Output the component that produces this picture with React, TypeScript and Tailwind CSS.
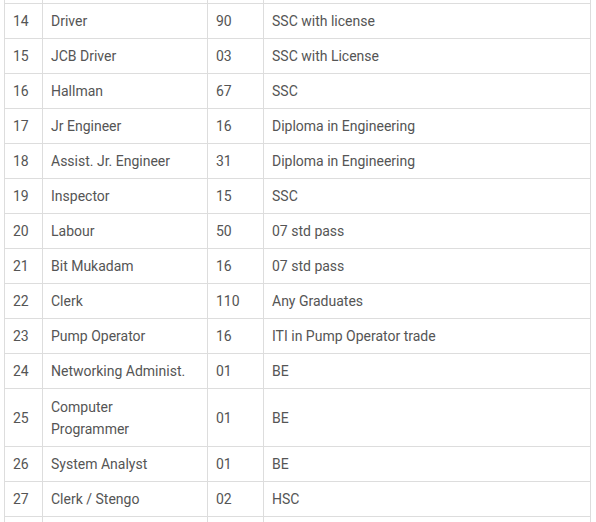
const rows: [string, string, string, string][] = [
  ["14", "Driver", "90", "SSC with license"],
  ["15", "JCB Driver", "03", "SSC with License"],
  ["16", "Hallman", "67", "SSC"],
  ["17", "Jr Engineer", "16", "Diploma in Engineering"],
  ["18", "Assist. Jr. Engineer", "31", "Diploma in Engineering"],
  ["19", "Inspector", "15", "SSC"],
  ["20", "Labour", "50", "07 std pass"],
  ["21", "Bit Mukadam", "16", "07 std pass"],
  ["22", "Clerk", "110", "Any Graduates"],
  ["23", "Pump Operator", "16", "ITI in Pump Operator trade"],
  ["24", "Networking Administ.", "01", "BE"],
  ["25", "Computer\nProgrammer", "01", "BE"],
  ["26", "System Analyst", "01", "BE"],
  ["27", "Clerk / Stengo", "02", "HSC"],
];

const td = "border border-[#dddddd] px-2 py-[6px] align-middle whitespace-pre-line";
const tdTall = "border border-[#dddddd] px-2 pt-[7px] pb-[6px] align-middle whitespace-pre-line";
const edge = "border-x border-[#dddddd] p-0";

export default function App() {
  return (
    <div className="h-[522px] w-[596px] overflow-hidden bg-white font-['Roboto',sans-serif] text-[14px] leading-[22px] text-[#555555]">
      <table className="ml-[4px] w-[587px] table-fixed border-collapse">
        <colgroup>
          <col className="w-[38px]" />
          <col className="w-[165px]" />
          <col className="w-[56px]" />
          <col />
        </colgroup>
        <tbody>
          <tr className="h-[3px]">
            <td className={edge} />
            <td className={edge} />
            <td className={edge} />
            <td className={edge} />
          </tr>
          {rows.map((r) => {
            const cls = r[1].includes("\n") ? tdTall : td;
            return (
              <tr key={r[0]}>
                <td className={cls}>{r[0]}</td>
                <td className={cls}>{r[1]}</td>
                <td className={cls}>{r[2]}</td>
                <td className={cls}>{r[3]}</td>
              </tr>
            );
          })}
          <tr className="h-[20px]">
            <td className={edge} />
            <td className={edge} />
            <td className={edge} />
            <td className={edge} />
          </tr>
        </tbody>
      </table>
    </div>
  );
}
